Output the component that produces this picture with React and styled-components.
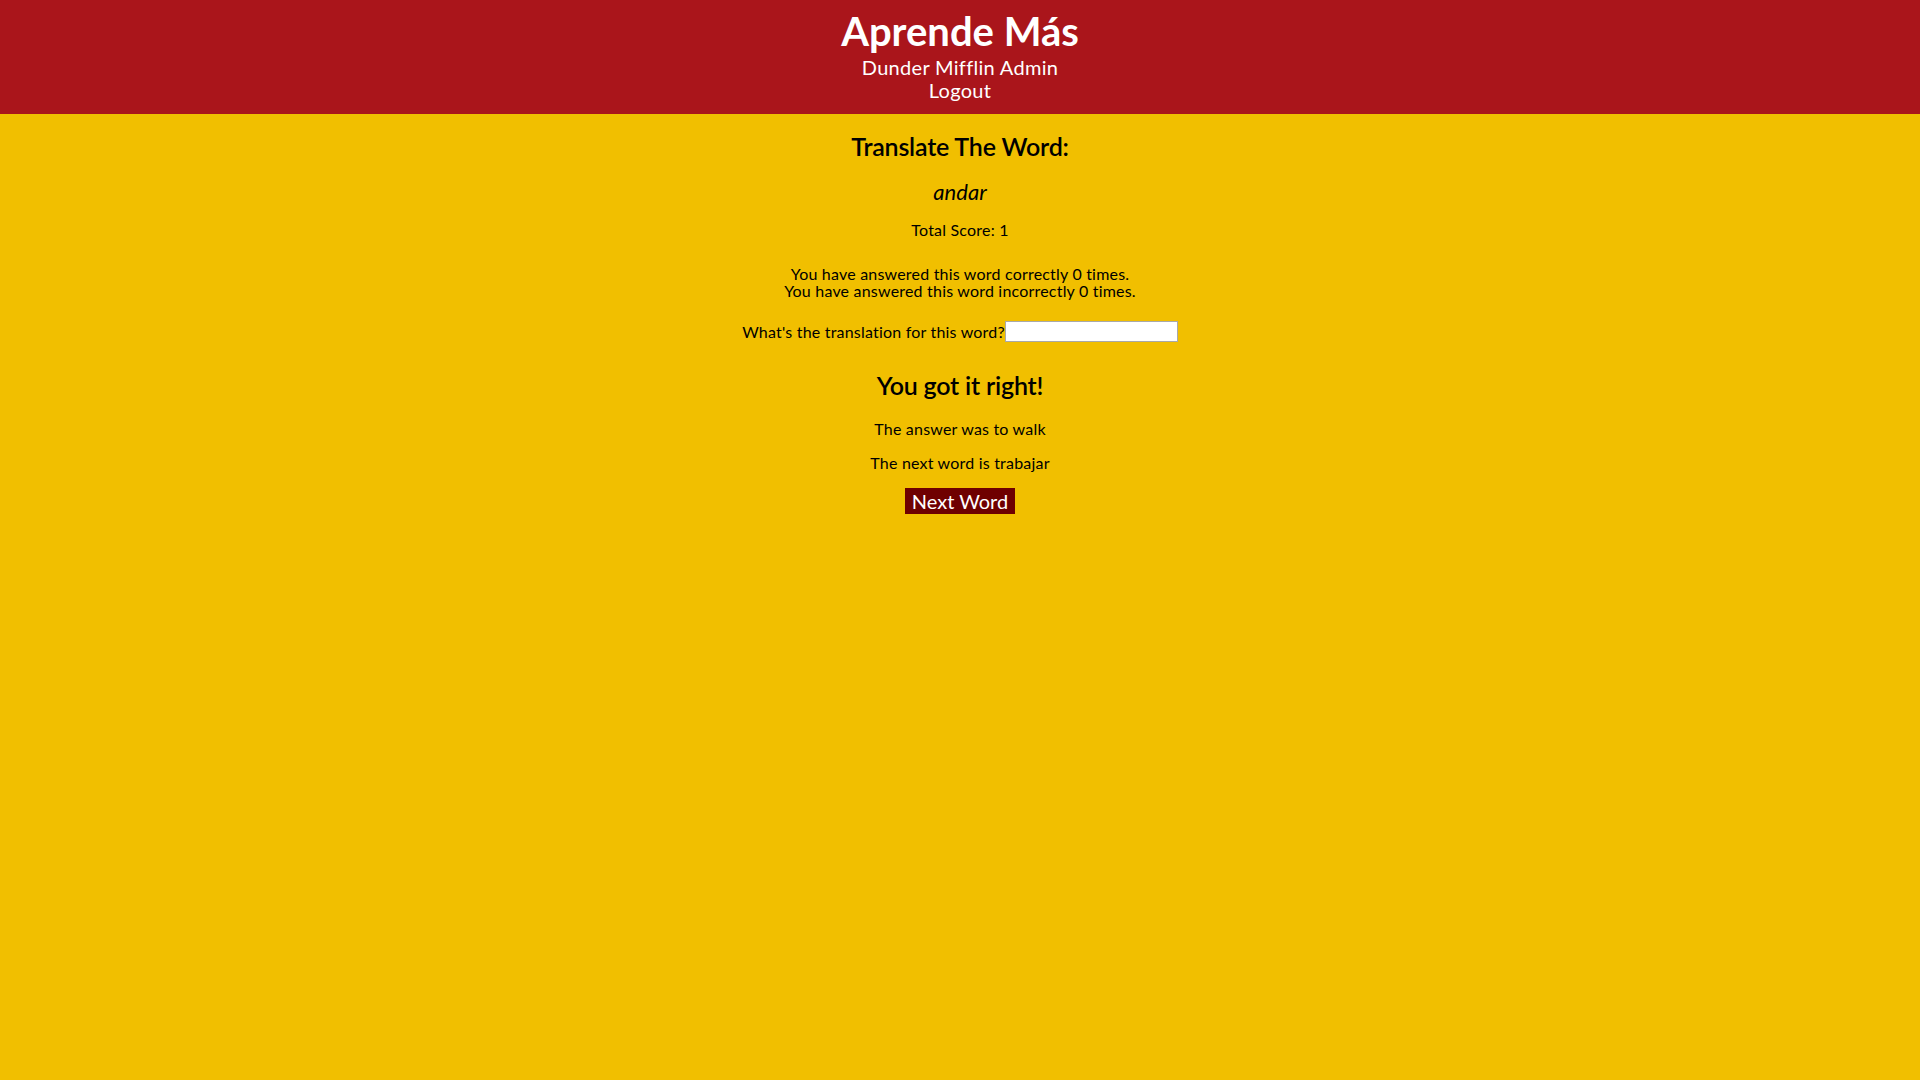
import React from 'react'
import styled, { createGlobalStyle } from 'styled-components'

const GlobalStyle = createGlobalStyle`
    html, body {
        margin: 0;
        padding: 0;
        background: #f1bf00;
    }
    body {
        font-family: Lato, 'Open Sans', sans-serif;
        color: #000000;
    }
`

const Header = styled.header`
    background: #aa151b;
    color: #ffffff;
    text-align: center;
    padding: 7px 0 12px;
`

const Title = styled.h1`
    margin: 0 0 1px;
    font-size: 40px;
    line-height: 48px;
    font-weight: 700;
`

const HeaderLine = styled.div`
    font-size: 20px;
    line-height: 23px;
    letter-spacing: 0.3px;
`

const LogoutLink = styled.a`
    color: #ffffff;
    text-decoration: none;
    cursor: pointer;
`

const Main = styled.main`
    display: flex;
    flex-direction: column;
    align-items: center;
    text-align: center;
    padding-top: 17px;
`

const Heading = styled.h2`
    margin: ${(p) => p.$top || 0}px 0 0;
    font-size: 25px;
    line-height: 30px;
    font-weight: 600;
    letter-spacing: -0.2px;
`

const Word = styled.div`
    margin-top: 18px;
    font-size: 22px;
    line-height: 26px;
    font-style: italic;
`

const Text = styled.p`
    margin: ${(p) => p.$top || 0}px 0 0;
    font-size: 16px;
    line-height: ${(p) => p.$lh || 20}px;
    letter-spacing: 0.2px;
`

const AnswerRow = styled.label`
    margin-top: 22px;
    display: flex;
    align-items: center;
    font-size: 16px;
    line-height: 21px;
    letter-spacing: 0.2px;
`

const Input = styled.input`
    width: 173px;
    height: 21px;
    box-sizing: border-box;
    border: 1px solid #a9a9a9;
    background: #ffffff;
    padding: 0 3px;
    margin: 0;
    outline: none;
`

const NextButton = styled.button`
    margin-top: 15px;
    width: 110px;
    height: 26px;
    border: none;
    padding: 0;
    background: #6f0000;
    color: #ffffff;
    font-family: inherit;
    font-size: 20px;
    line-height: 26px;
    cursor: pointer;
`

const App = () => (
    <>
        <GlobalStyle />
        <Header>
            <Title>Aprende Más</Title>
            <HeaderLine>Dunder Mifflin Admin</HeaderLine>
            <HeaderLine>
                <LogoutLink>Logout</LogoutLink>
            </HeaderLine>
        </Header>
        <Main>
            <Heading>Translate The Word:</Heading>
            <Word>andar</Word>
            <Text $top={15}>Total Score: 1</Text>
            <Text $top={25} $lh={17}>
                You have answered this word correctly 0 times.
                <br />
                You have answered this word incorrectly 0 times.
            </Text>
            <AnswerRow>
                What's the translation for this word?
                <Input type="text" />
            </AnswerRow>
            <Heading $top={28}>You got it right!</Heading>
            <Text $top={19}>The answer was to walk</Text>
            <Text $top={14}>The next word is trabajar</Text>
            <NextButton>Next Word</NextButton>
        </Main>
    </>
)

export default App
